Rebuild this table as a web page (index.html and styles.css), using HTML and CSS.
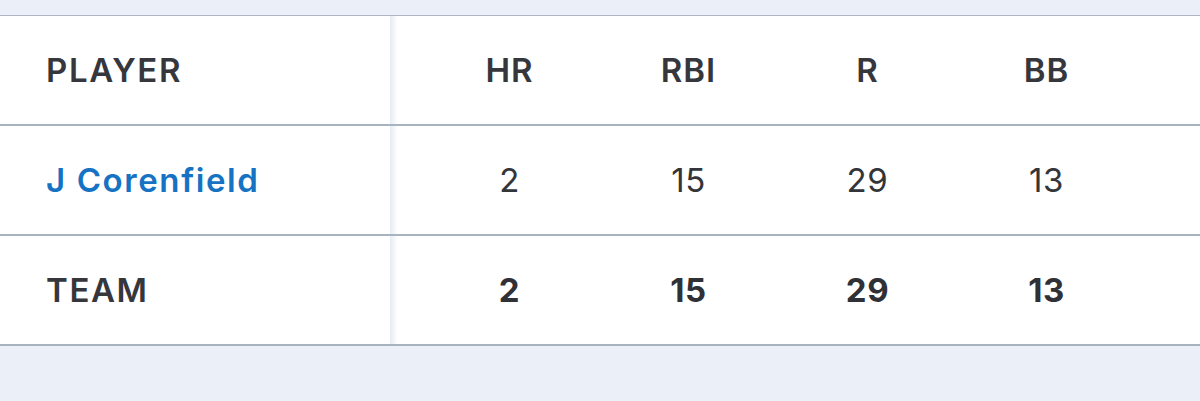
FILE: index.html
```html
<!DOCTYPE html>
<html>
<head>
<meta charset="utf-8">
<link rel="stylesheet" href="styles.css">
</head>
<body>
<div class="table">
  <div class="row head">
    <div class="cell name">PLAYER</div>
    <div class="stats">
      <div class="cell">HR</div>
      <div class="cell">RBI</div>
      <div class="cell">R</div>
      <div class="cell">BB</div>
    </div>
  </div>
  <div class="row">
    <div class="cell name link">J Corenfield</div>
    <div class="stats">
      <div class="cell">2</div>
      <div class="cell">15</div>
      <div class="cell">29</div>
      <div class="cell">13</div>
    </div>
  </div>
  <div class="row total">
    <div class="cell name">TEAM</div>
    <div class="stats">
      <div class="cell">2</div>
      <div class="cell">15</div>
      <div class="cell">29</div>
      <div class="cell">13</div>
    </div>
  </div>
</div>
</body>
</html>
```
FILE: styles.css
```css
html, body {
  margin: 0;
  padding: 0;
  background: #ebf0f8;
  font-family: Inter, "Liberation Sans", sans-serif;
  color: #35373d;
}
.table {
  margin-top: 15px;
  background: #fff;
  border-top: 1px solid #aeb7c3;
}
.row {
  display: flex;
  height: 108px;
  border-bottom: 2px solid #a8b3c0;
  align-items: stretch;
}
.row .name {
  width: 390px;
  box-sizing: border-box;
  padding-left: 46px;
  display: flex;
  align-items: center;
  position: relative;
  font-size: 33px;
  font-weight: 600;
  letter-spacing: 1.6px;
}
.row .name::after {
  content: "";
  position: absolute;
  right: -8px;
  top: 0;
  bottom: 0;
  width: 8px;
  background: linear-gradient(to right, #e6ebf3, rgba(255,255,255,0));
}
.link { color: #1672c3; }
.stats {
  display: flex;
  padding-left: 30px;
}
.stats .cell {
  width: 179px;
  display: flex;
  align-items: center;
  justify-content: center;
  font-size: 33px;
  font-weight: 400;
  color: #333539;
  letter-spacing: 0.6px;
}
.head .stats .cell { font-weight: 600; color: #35373d; letter-spacing: 1px; }
.total .stats .cell { font-weight: 700; color: #2f3136; }
.total .name { font-weight: 600; }
```
